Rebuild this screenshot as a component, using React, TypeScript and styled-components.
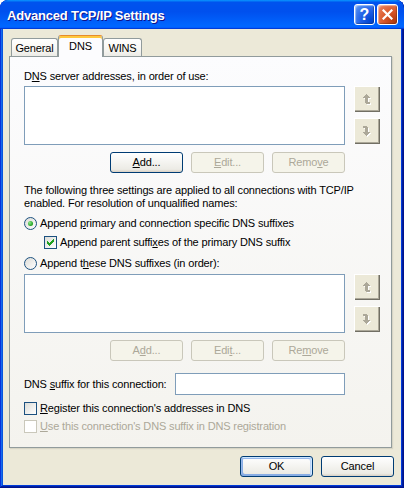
import React from 'react';
import styled, { createGlobalStyle, css } from 'styled-components';

const Global = createGlobalStyle`
  html, body { margin: 0; padding: 0; background: #fff; }
  body { font-family: "Liberation Sans", Arial, sans-serif; font-size: 11px; letter-spacing: -0.15px; color: #000; }
  * { box-sizing: border-box; }
`;

const Window = styled.div`
  width: 404px;
  height: 488px;
  display: flex;
  flex-direction: column;
  background: #ece9d8;
  border-radius: 8px 8px 0 0;
  overflow: hidden;
  padding: 0 3px 3px 3px;
  box-shadow: inset -1px -1px #00138c, inset 1px 1px #0831d9, inset -2px -2px #001ea0,
    inset 2px 2px #166aee, inset -3px -3px #003bda, inset 3px 3px #0855dd;
`;

const TitleBar = styled.div`
  height: 29px;
  margin: 0 -3px;
  flex: none;
  display: flex;
  align-items: center;
  padding: 0 6px 0 7px;
  border-radius: 8px 8px 0 0;
  background: linear-gradient(180deg, #0997ff, #0053ee 8%, #0050ee 40%, #06f 88%, #06f 93%, #005bff 95%, #003dd7 96%, #003dd7);
`;

const TitleText = styled.div`
  flex: 1;
  color: #fff;
  font-family: "Liberation Sans", Arial, sans-serif;
  font-weight: bold;
  font-size: 13px;
  letter-spacing: -0.2px;
  text-shadow: 1px 1px #0f1089;
  padding-top: 1px;
`;

const CaptionButton = styled.div<{ $kind: 'help' | 'close' }>`
  width: 21px;
  height: 21px;
  margin-left: 2px;
  border: 1px solid #fff;
  border-radius: 3px;
  display: flex;
  align-items: center;
  justify-content: center;
  color: #fff;
  font-weight: bold;
  font-size: 16px;
  letter-spacing: 0;
  font-family: "Liberation Sans", Arial, sans-serif;
  box-shadow: inset -1px -1px 1px rgba(0, 0, 0, 0.25), inset 1px 1px 1px rgba(255, 255, 255, 0.45);
  ${(p) =>
    p.$kind === 'help'
      ? css`background: radial-gradient(circle at 85% 85%, #0043cf 0%, #1f5fe6 45%, #4a86f0 80%, #8db2f7 100%);`
      : css`background: radial-gradient(circle at 85% 85%, #b23a10 0%, #d9572a 45%, #e6774f 80%, #f3b098 100%);`}
`;

const Body = styled.div`
  flex: 1;
  display: flex;
  flex-direction: column;
  padding: 6px 9px 0 6px;
`;

const TabStrip = styled.div`
  display: flex;
  align-items: flex-start;
  height: 22px;
  padding-left: 2px;
  margin-bottom: -1px;
  position: relative;
  z-index: 1;
`;

const Tab = styled.div<{ $active?: boolean; $w: number }>`
  width: ${(p) => p.$w}px;
  display: flex;
  justify-content: center;
  border: 1px solid #919b9c;
  border-bottom: none;
  border-radius: 3px 3px 0 0;
  ${(p) =>
    p.$active
      ? css`
          height: 22px;
          padding-top: 4px;
          background: #fcfcfe;
          border-top: 1px solid #e68b2c;
          box-shadow: inset 0 2px #ffc83c;
        `
      : css`
          height: 18px;
          margin-top: 3px;
          padding-top: 3px;
          background: linear-gradient(180deg, #fff, #f8f7f3 60%, #ecebe6);
        `}
`;

const Panel = styled.div`
  border: 1px solid #919b9c;
  background: linear-gradient(180deg, #fcfcfe, #f4f3ee);
  box-shadow: 1px 1px 1px rgba(208, 206, 191, 0.75);
  padding: 13px 11px 14px 14px;
  display: flex;
  flex-direction: column;
`;

const Text = styled.div<{ $mt?: number; $disabled?: boolean }>`
  line-height: 13px;
  margin-top: ${(p) => p.$mt ?? 0}px;
  color: ${(p) => (p.$disabled ? '#aca899' : '#000')};
  white-space: nowrap;
`;

const Key = styled.span`
  text-decoration: underline;
  text-underline-offset: 1px;
`;

const ListRow = styled.div<{ $mt: number }>`
  display: flex;
  gap: 9px;
  margin-top: ${(p) => p.$mt}px;
`;

const ListBox = styled.div`
  width: 321px;
  height: 59px;
  border: 1px solid #7f9db9;
  background: #fff;
`;

const ArrowCol = styled.div`
  display: flex;
  flex-direction: column;
  gap: 6px;
`;

const ArrowButton = styled.div`
  width: 26px;
  height: 26px;
  display: flex;
  align-items: center;
  justify-content: center;
  padding-right: 1px;
  background: #ece9d8;
  box-shadow: inset 1px 1px #fff, inset -1px -1px #716f64, inset -2px -2px #aca899;
`;

const ButtonRow = styled.div<{ $mt: number }>`
  width: 321px;
  display: flex;
  justify-content: flex-end;
  gap: 8px;
  margin-top: ${(p) => p.$mt}px;
`;

const Button = styled.div<{ $disabled?: boolean; $default?: boolean }>`
  width: 73px;
  height: 21px;
  display: flex;
  align-items: center;
  justify-content: center;
  border-radius: 3px;
  line-height: 13px;
  ${(p) =>
    p.$disabled
      ? css`
          border: 1px solid #c9c7ba;
          background: #f5f4ea;
          color: #aca899;
        `
      : css`
          border: 1px solid #003c74;
          background: linear-gradient(180deg, #fff, #ecebe5 86%, #d8d0c4);
          color: #000;
        `}
  ${(p) =>
    p.$default &&
    css`
      box-shadow: inset -1px 1px #cee7ff, inset 1px 2px #98b8ea, inset -2px 2px #bcd4f6,
        inset 1px -1px #89ade4, inset 2px -2px #89ade4;
    `}
`;

const OptionRow = styled.div<{ $mt: number; $indent?: number }>`
  display: flex;
  align-items: center;
  gap: 3px;
  height: 13px;
  margin-top: ${(p) => p.$mt}px;
  margin-left: ${(p) => p.$indent ?? 0}px;
`;

const Radio = styled.div<{ $checked?: boolean }>`
  width: 13px;
  height: 13px;
  flex: none;
  border-radius: 50%;
  border: 1px solid #1c5180;
  background: linear-gradient(135deg, #dcdcd7, #fff);
  display: flex;
  align-items: center;
  justify-content: center;
  &::after {
    content: '';
    display: ${(p) => (p.$checked ? 'block' : 'none')};
    width: 5px;
    height: 5px;
    border-radius: 50%;
    background: radial-gradient(circle at 35% 35%, #8be88b, #21a121 70%);
  }
`;

const CheckBox = styled.div<{ $disabled?: boolean }>`
  width: 13px;
  height: 13px;
  flex: none;
  border: 1px solid ${(p) => (p.$disabled ? '#cac8bb' : '#1c5180')};
  background: ${(p) => (p.$disabled ? '#fff' : 'linear-gradient(135deg, #dcdcd7, #fff)')};
  display: flex;
  align-items: center;
  justify-content: center;
`;

const SuffixRow = styled.div`
  width: 321px;
  display: flex;
  align-items: center;
  justify-content: space-between;
  margin-top: 12px;
`;

const TextInput = styled.div`
  width: 170px;
  height: 22px;
  border: 1px solid #7f9db9;
  background: #fff;
`;

const Footer = styled.div`
  display: flex;
  justify-content: flex-end;
  gap: 8px;
  margin-top: 8px;
  margin-right: -2px;
`;

const Check = () => (
  <svg width="7" height="7" viewBox="0 0 7 7" shapeRendering="crispEdges">
    <path
      fill="#21a121"
      d="M0 2h1v3H0zM1 3h1v3H1zM2 4h1v3H2zM3 3h1v3H3zM4 2h1v3H4zM5 1h1v3H5zM6 0h1v3H6z"
    />
  </svg>
);

const ARROW = 'M3 0h1v1h1v1h1v1h1v1H5v4h2v2H3v-1H2V4H0V3h1V2h1V1h1z';

const ArrowIcon = ({ down }: { down?: boolean }) => {
  const flip = down ? ' rotate(180 3.5 5)' : '';
  return (
    <svg width="8" height="11" viewBox="0 0 8 11" shapeRendering="crispEdges">
      <path d={ARROW} fill="#fff" transform={`translate(1 1)${flip}`} />
      <path d={ARROW} fill="#aca899" transform={down ? 'rotate(180 3.5 5)' : undefined} />
    </svg>
  );
};

const CloseX = () => (
  <svg width="11" height="11" viewBox="0 0 11 11">
    <path d="M1.5 1.5L9.5 9.5M9.5 1.5L1.5 9.5" stroke="#fff" strokeWidth="2.2" strokeLinecap="square" />
  </svg>
);

const Lists = () => (
  <ArrowCol>
    <ArrowButton>
      <ArrowIcon />
    </ArrowButton>
    <ArrowButton>
      <ArrowIcon down />
    </ArrowButton>
  </ArrowCol>
);

export default function App() {
  return (
    <>
      <Global />
      <Window>
        <TitleBar>
          <TitleText>Advanced TCP/IP Settings</TitleText>
          <CaptionButton $kind="help">?</CaptionButton>
          <CaptionButton $kind="close">
            <CloseX />
          </CaptionButton>
        </TitleBar>
        <Body>
          <TabStrip>
            <Tab $w={47}>General</Tab>
            <Tab $w={45} $active>
              DNS
            </Tab>
            <Tab $w={39}>WINS</Tab>
          </TabStrip>
          <Panel>
            <Text>
              D<Key>N</Key>S server addresses, in order of use:
            </Text>
            <ListRow $mt={3}>
              <ListBox />
              <Lists />
            </ListRow>
            <ButtonRow $mt={7}>
              <Button>
                <span>
                  <Key>A</Key>dd...
                </span>
              </Button>
              <Button $disabled>
                <span>
                  <Key>E</Key>dit...
                </span>
              </Button>
              <Button $disabled>
                <span>
                  Remo<Key>v</Key>e
                </span>
              </Button>
            </ButtonRow>
            <Text $mt={11}>
              The following three settings are applied to all connections with TCP/IP
              <br />
              enabled. For resolution of unqualified names:
            </Text>
            <OptionRow $mt={7}>
              <Radio $checked />
              <Text>
                Append <Key>p</Key>rimary and connection specific DNS suffixes
              </Text>
            </OptionRow>
            <OptionRow $mt={6} $indent={20}>
              <CheckBox>
                <Check />
              </CheckBox>
              <Text>
                Append parent suffi<Key>x</Key>es of the primary DNS suffix
              </Text>
            </OptionRow>
            <OptionRow $mt={8}>
              <Radio />
              <Text>
                Append t<Key>h</Key>ese DNS suffixes (in order):
              </Text>
            </OptionRow>
            <ListRow $mt={4}>
              <ListBox />
              <Lists />
            </ListRow>
            <ButtonRow $mt={7}>
              <Button $disabled>
                <span>
                  A<Key>d</Key>d...
                </span>
              </Button>
              <Button $disabled>
                <span>
                  Edi<Key>t</Key>...
                </span>
              </Button>
              <Button $disabled>
                <span>
                  Re<Key>m</Key>ove
                </span>
              </Button>
            </ButtonRow>
            <SuffixRow>
              <Text>
                DNS <Key>s</Key>uffix for this connection:
              </Text>
              <TextInput />
            </SuffixRow>
            <OptionRow $mt={7}>
              <CheckBox />
              <Text>
                <Key>R</Key>egister this connection's addresses in DNS
              </Text>
            </OptionRow>
            <OptionRow $mt={5}>
              <CheckBox $disabled />
              <Text $disabled>
                <Key>U</Key>se this connection's DNS suffix in DNS registration
              </Text>
            </OptionRow>
          </Panel>
          <Footer>
            <Button $default>OK</Button>
            <Button>Cancel</Button>
          </Footer>
        </Body>
      </Window>
    </>
  );
}
